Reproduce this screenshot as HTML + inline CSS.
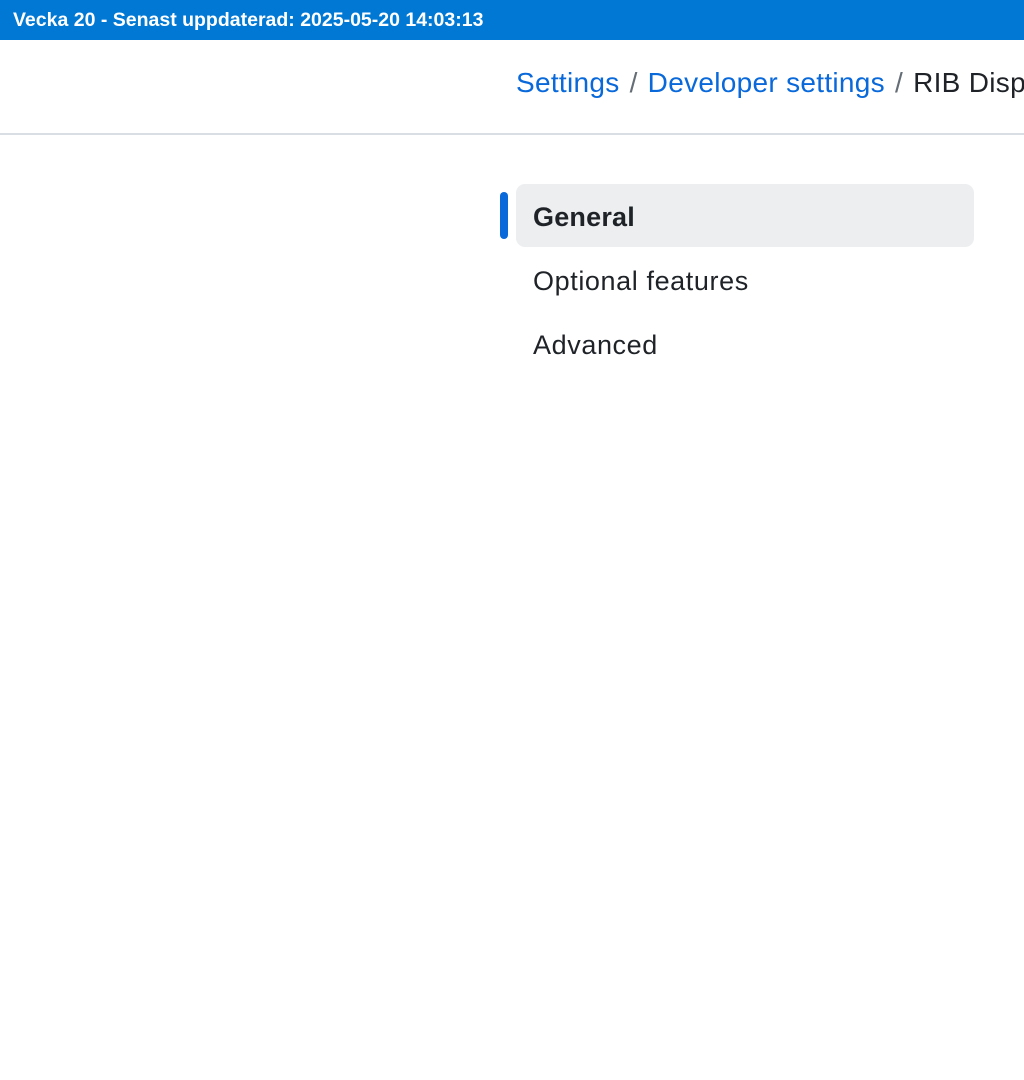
<!DOCTYPE html>
<html><head><meta charset="utf-8"><style>
html,body{margin:0;padding:0;width:1024px;height:1080px;background:#fff;overflow:hidden;font-family:"Liberation Sans",sans-serif;}
.top{position:absolute;left:0;top:0;width:1024px;height:40px;background:#0078d4;color:#fff;font-weight:bold;font-size:19.5px;line-height:40px;padding-left:13px;box-sizing:border-box;white-space:nowrap;}
.bc{position:absolute;left:516px;top:67px;font-size:28px;letter-spacing:0.3px;white-space:nowrap;color:#1f2328;}
.bc a{color:#0969da;text-decoration:none;}
.bc .s{color:#656d76;margin:0 10px;}
.line{position:absolute;left:0;top:133px;width:1024px;height:2px;background:#d8dee4;}
.sel{position:absolute;left:516px;top:184px;width:458px;height:63px;background:#eceef0;border-radius:9px;}
.bar{position:absolute;left:500px;top:192px;width:8px;height:47px;background:#0969da;border-radius:4px;}
.it{position:absolute;left:533px;font-size:27px;letter-spacing:0.6px;color:#1f2328;white-space:nowrap;}
</style></head><body>
<div class="top">Vecka 20 - Senast uppdaterad: 2025-05-20 14:03:13</div>
<div class="bc"><a>Settings</a><span class="s">/</span><a>Developer settings</a><span class="s">/</span>RIB Display</div>
<div class="line"></div>
<div class="sel"></div>
<div class="bar"></div>
<div class="it" style="top:202px;font-weight:bold;letter-spacing:0.2px;">General</div>
<div class="it" style="top:266px;">Optional features</div>
<div class="it" style="top:330px;">Advanced</div>
</body></html>
